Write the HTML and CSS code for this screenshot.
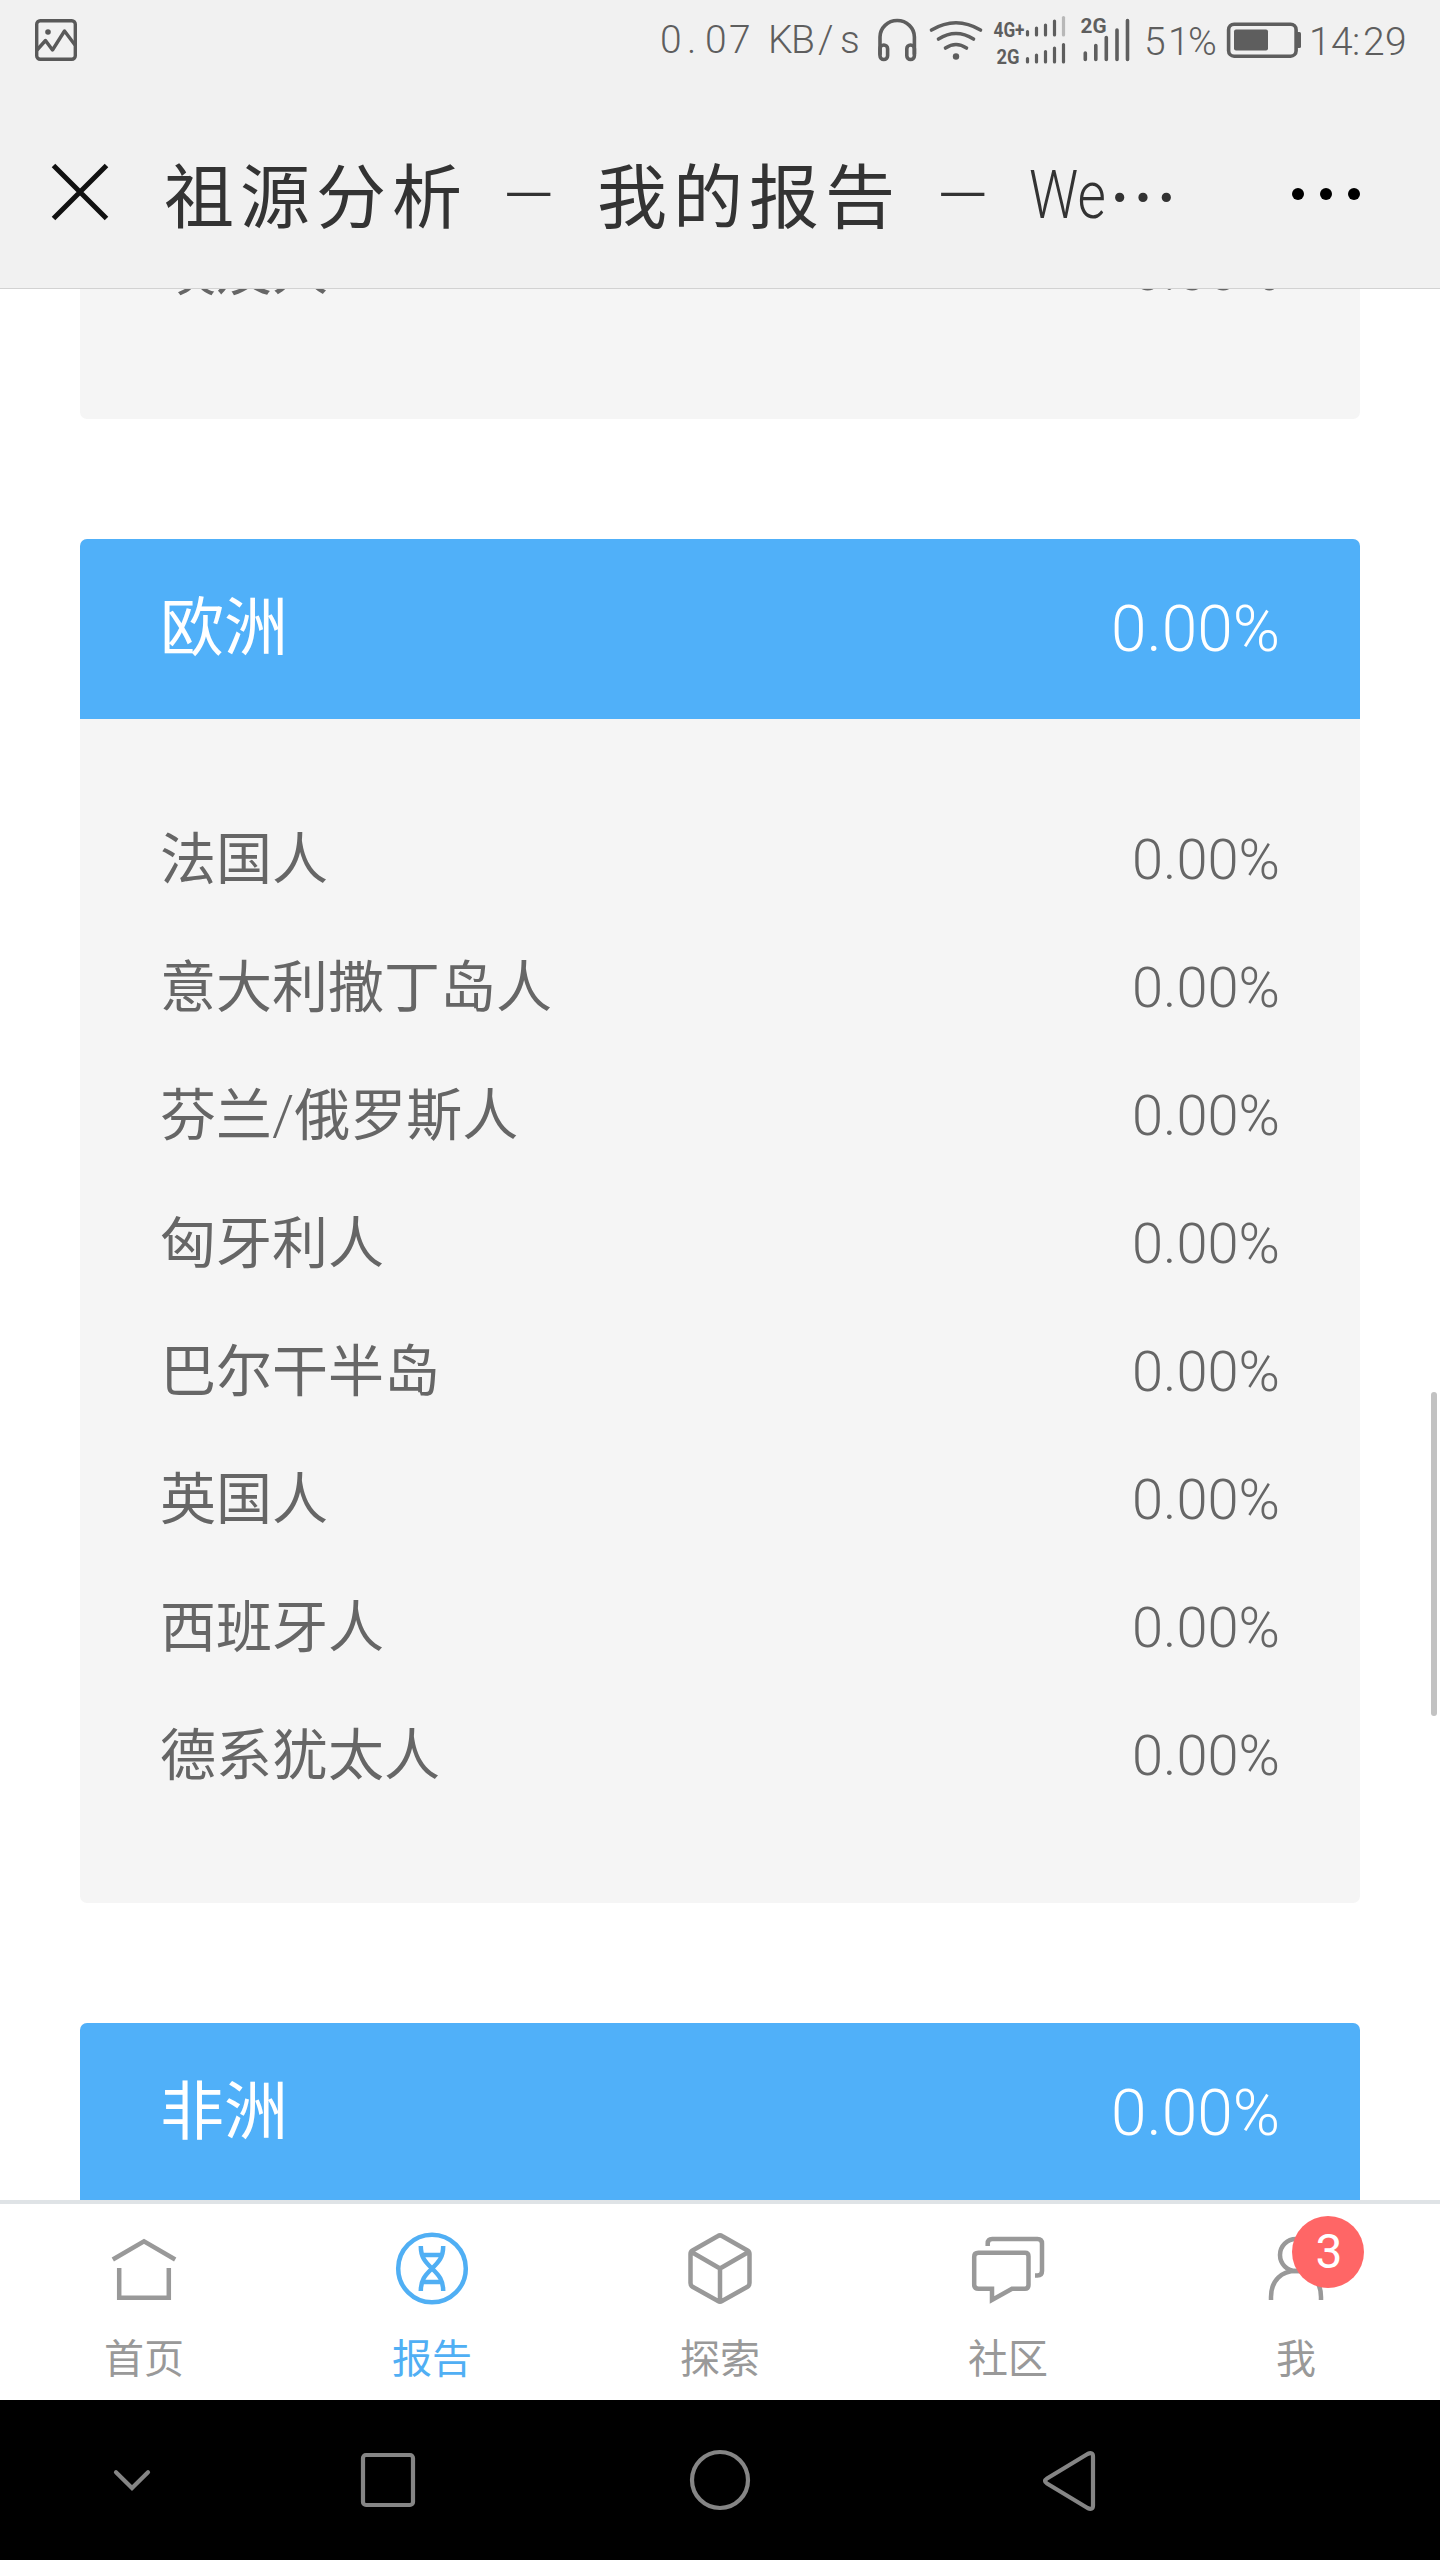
FILE: index.html
```html
<!DOCTYPE html>
<html lang="zh-CN">
<head>
<meta charset="utf-8">
<title>祖源分析 — 我的报告</title>
<link rel="stylesheet" href="styles.css">
</head>
<body>
<div class="screen">
  <header class="top">
    <div class="status">
      <svg class="status-photo" width="44" height="44" viewBox="34 18 44 44" fill="none" stroke="#595959" stroke-width="3.4">
        <rect x="36.7" y="20.7" width="38.6" height="38.6" rx="3.5"/>
        <path d="M37 50 45.500 40.500 52.500 50 64.500 31 75 45" stroke-linejoin="round"/>
        <circle cx="48" cy="32" r="2.800" fill="#595959" stroke="none"/>
      </svg>
      <svg class="status-right" width="760" height="80" viewBox="650 0 760 80">
        <g class="status-text">
          <text y="53" x="660 687 705 729 750 768 791 818 840">0.07 KB/s</text>
          <text y="55" x="1144 1168 1188">51%</text>
          <text y="55" x="1309 1331 1352 1363 1385">14:29</text>
        </g>
        <g fill="none" stroke="#5e5e5e" stroke-width="3.6" stroke-linecap="round">
          <path d="M880 54V37a17.200 16.500 0 0 1 34.400 0v17"/>
          <rect x="880" y="45" width="7.600" height="14.500" rx="3.800"/>
          <rect x="906.800" y="45" width="7.600" height="14.500" rx="3.800"/>
          <path d="M931.500 30q24.500-14.500 49 0M938.500 39q17.500-11 35 0M945.500 48q10.500-7 21 0"/>
          <rect x="1228.600" y="24.200" width="67.500" height="32" rx="5.500"/>
        </g>
        <g fill="#5e5e5e">
          <circle cx="956" cy="56.500" r="3.200"/>
          <rect x="1234" y="29.500" width="34" height="21" rx="2"/>
          <path d="M1297 32h2.500a1.500 1.500 0 0 1 1.500 1.500v13a1.500 1.500 0 0 1-1.500 1.500H1297z"/>
        </g>
        <g stroke="#5e5e5e" stroke-width="3.200" stroke-linecap="round">
          <path d="M1027.500 31.500V35M1036.500 28V35M1045.500 25V35M1054.500 21V35M1027.500 58.500V62M1036.500 55V62M1045.500 51.500V62M1054.500 48V62M1063.500 44.500V62"/>
          <path d="M1063.500 17.500V35" stroke="#b8b8b8"/>
          <path d="M1085.300 53V59.500M1095.800 45.500V59.500M1106.300 37.500V59.500M1117 30V59.500M1127.500 20.500V59.500" stroke-width="3.600"/>
        </g>
        <g class="status-net">
          <text x="993.500" y="36.500" textLength="31" lengthAdjust="spacingAndGlyphs">4G+</text>
          <text x="996.500" y="63.500" textLength="23" lengthAdjust="spacingAndGlyphs">2G</text>
          <text x="1080.500" y="32.500" textLength="26" lengthAdjust="spacingAndGlyphs">2G</text>
        </g>
      </svg>
    </div>
    <div class="titlebar">
      <svg width="1440" height="208" viewBox="0 80 1440 208">
        <path d="M53.500 165.500 106.500 218.500M106.500 165.500 53.500 218.500" stroke="#111" stroke-width="5"/>
        <g class="title-text">
          <text y="223" x="164 240 316 392">祖源分析</text>
          <text class="latin" transform="translate(503 218) scale(.99 1)">—</text>
          <text y="223" x="597 673 749 825">我的报告</text>
          <text class="latin" transform="translate(937 218) scale(.99 1)">—</text>
          <text class="latin" transform="translate(1029 218) scale(.82 1)">We</text>
          <text y="224" x="1108">…</text>
        </g>
        <g fill="#000"><circle cx="1298" cy="194" r="6"/><circle cx="1326" cy="194" r="6"/><circle cx="1354" cy="194" r="6"/></g>
      </svg>
    </div>
  </header>

  <main class="feed">
    <section class="card card-prev">
      <ul class="rows"><li><span>埃及人</span><span class="num">0.00%</span></li></ul>
    </section>
    <section class="card">
      <h2><span>欧洲</span><span class="num">0.00%</span></h2>
      <ul class="rows">
        <li><span>法国人</span><span class="num">0.00%</span></li>
        <li><span>意大利撒丁岛人</span><span class="num">0.00%</span></li>
        <li><span>芬兰<span class="num">/</span>俄罗斯人</span><span class="num">0.00%</span></li>
        <li><span>匈牙利人</span><span class="num">0.00%</span></li>
        <li><span>巴尔干半岛</span><span class="num">0.00%</span></li>
        <li><span>英国人</span><span class="num">0.00%</span></li>
        <li><span>西班牙人</span><span class="num">0.00%</span></li>
        <li><span>德系犹太人</span><span class="num">0.00%</span></li>
      </ul>
    </section>
    <section class="card">
      <h2><span>非洲</span><span class="num">0.00%</span></h2>
      <ul class="rows"></ul>
    </section>
    <div class="scrollbar"></div>
  </main>

  <nav class="tabs">
    <a class="tab">
      <svg width="80" height="80" viewBox="104 2228 80 80"><path d="M112.800 2259.500 144 2241.300 175.200 2259.500M119.200 2268v29.700h49.600V2268"/></svg>
      <span>首页</span>
    </a>
    <a class="tab active">
      <svg width="80" height="80" viewBox="392 2228 80 80"><circle cx="432" cy="2268.500" r="33.800"/><path d="M420.800 2246c0 11 4 15.500 11.200 22.500s11.200 11.500 11.200 22.500M443.200 2246c0 11-4 15.500-11.200 22.500s-11.200 11.500-11.200 22.500M423 2255h18M423 2282h18"/></svg>
      <span>报告</span>
    </a>
    <a class="tab">
      <svg width="80" height="80" viewBox="680 2228 80 80"><path stroke-linejoin="round" d="M718 2236q2-1.200 4 0l25.500 14.500q2 1.200 2 3.500v29q0 2.500-2 3.700L722 2301q-2 1.200-4 0l-25.500-14.300q-2-1.200-2-3.700v-29q0-2.300 2-3.500zM691.500 2252 720 2268.500 748.500 2252M720 2268.500V2301"/></svg>
      <span>探索</span>
    </a>
    <a class="tab">
      <svg width="80" height="80" viewBox="968 2228 80 80"><path d="M987.700 2246v-2.500q0-4.500 4.500-4.500h45.300q4.500 0 4.500 4.500v27.500q0 4.500-4.500 4.500H1035M978.500 2252.700h46.500q3.500 0 3.500 3.500v28.500q0 4-3.500 4h-13L992 2300v-11.300h-13.500q-4.300 0-4.300-4v-28q0-4 4.300-4z"/></svg>
      <span>社区</span>
    </a>
    <a class="tab">
      <svg width="80" height="80" viewBox="1256 2228 80 80"><circle cx="1296" cy="2255" r="16"/><path d="M1271 2300v-3c0-17 11-26 25-26s25 9 25 26v3"/></svg>
      <span>我</span>
      <b class="badge">3</b>
    </a>
  </nav>

  <nav class="keys">
    <svg width="80" height="80" viewBox="92 2440 80 80"><path stroke-linecap="round" d="M116 2472.200 132 2488 148 2472.200"/></svg>
    <svg width="80" height="80" viewBox="348 2440 80 80"><rect x="363" y="2455" width="50" height="50" rx="3"/></svg>
    <svg width="80" height="80" viewBox="680 2440 80 80"><circle cx="720" cy="2480" r="28"/></svg>
    <svg width="80" height="80" viewBox="1029 2440 80 80"><path d="M1047 2478.500 1087.500 2454q5.500-2.500 5.500 2.500v49q0 5-5.500 2.500L1047 2483.500q-4-2.500 0-5z"/></svg>
  </nav>
</div>
</body>
</html>
```
FILE: styles.css
```css
* { box-sizing: border-box; margin: 0; padding: 0; }

body {
  width: 1440px;
  background: #fff;
  font-family: Roboto, "Noto Sans CJK SC", sans-serif;
}

svg { display: block; flex: none; }

.screen {
  display: flex;
  flex-direction: column;
  width: 1440px;
  height: 2560px;
  overflow: hidden;
}

/* Status bar and page title */
.top {
  flex: none;
  height: 289px;
  background: #f1f1f1;
  border-bottom: 1px solid #d2d2d2;
}
.status {
  display: flex;
  justify-content: space-between;
  height: 80px;
  padding: 0 30px 0 34px;
}
.status-photo { margin-top: 18px; }
.status-text { font: 300 39px Roboto, sans-serif; fill: #5e5e5e; }
.status-net { font: 700 21px Roboto, sans-serif; fill: #5e5e5e; }
.title-text { font: 400 70px "Noto Sans CJK SC", sans-serif; fill: #333; }
.title-text .latin { font: 300 67px Roboto, sans-serif; }

/* Region cards */
.feed {
  position: relative;
  display: flex;
  flex-direction: column;
  gap: 120px;
  flex: none;
  height: 1911px;
  padding: 0 80px;
  overflow: hidden;
}
.card {
  flex: none;
  border-radius: 7px;
  background: #f5f5f5;
  overflow: hidden;
}
.card h2 {
  display: flex;
  justify-content: space-between;
  align-items: center;
  height: 180px;
  padding: 0 80px;
  background: #50b0f9;
  color: #fff;
  font-size: 64px;
  font-weight: 400;
  line-height: 180px;
}
.card h2 .num { padding-top: 1px; }
.rows {
  list-style: none;
  padding: 77px 80px 83px;
}
.rows li {
  display: flex;
  justify-content: space-between;
  align-items: center;
  height: 128px;
  color: #666;
  font-size: 56px;
  line-height: 128px;
}
.num { font-weight: 300; }
.card-prev {
  display: flex;
  flex-direction: column;
  justify-content: flex-end;
  height: 130px;
  border-radius: 0 0 7px 7px;
}
.card-prev .rows { padding-top: 0; padding-bottom: 84px; }
.scrollbar {
  position: absolute;
  top: 1103px;
  right: 3px;
  width: 6px;
  height: 324px;
  border-radius: 3px;
  background: #c2c2c2;
}

/* Tab bar */
.tabs {
  display: grid;
  grid-template-columns: repeat(5, 1fr);
  flex: none;
  height: 200px;
  border-top: 4px solid #dfe3e6;
}
.tab {
  position: relative;
  display: flex;
  flex-direction: column;
  align-items: center;
  padding-top: 24px;
  color: #999;
  font-size: 40px;
  line-height: 56px;
}
.tab span { margin-top: 24px; }
.tab svg { fill: none; stroke: currentColor; stroke-width: 4.5; }
.active { color: #50aff4; }
.badge {
  position: absolute;
  top: 12px;
  left: 140px;
  width: 72px;
  height: 72px;
  padding-left: 2px;
  border-radius: 50%;
  background: #f66;
  color: #fff;
  font-size: 48px;
  font-weight: 400;
  line-height: 72px;
  text-align: center;
}

/* System keys */
.keys {
  display: grid;
  grid-template-columns: 264px 248px 416px 282px;
  place-items: center;
  flex: none;
  height: 160px;
  background: #000;
}
.keys svg { fill: none; stroke: #858585; stroke-width: 4.2; }
```
